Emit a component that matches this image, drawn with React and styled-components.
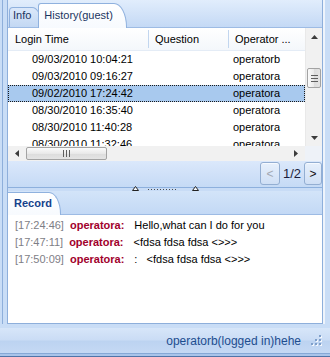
import React from 'react';
import styled, { createGlobalStyle, css } from 'styled-components';

const Global = createGlobalStyle`
  html, body { margin: 0; padding: 0; }
  body { width: 330px; height: 357px; overflow: hidden; background: #c9ddf6; }
`;

const FONT = `"Liberation Sans", Arial, sans-serif`;

const Window = styled.div`
  width: 330px;
  height: 357px;
  display: flex;
  flex-direction: column;
  background: #c9ddf6;
  font-family: ${FONT};
  font-size: 11px;
  color: #000;
  overflow: hidden;
`;

const Body = styled.div`
  height: 328px;
  flex: none;
  display: flex;
  box-sizing: border-box;
  padding: 0 5px 4px 2px;
`;

const Rail = styled.div`
  flex: 1;
  display: flex;
  min-width: 0;
  border-left: 1px solid #8eafdb;
  border-right: 2px solid #eef4fc;
  padding-left: 4px;
`;

const Panels = styled.div`
  flex: 1;
  display: flex;
  flex-direction: column;
  min-width: 0;
  border-left: 1px solid #8eafdb;
  border-right: 1px solid #8eafdb;
`;

const TopPanel = styled.section`
  height: 187px;
  flex: none;
  display: flex;
  flex-direction: column;
`;

const TabStrip = styled.div`
  height: 28px;
  flex: none;
  box-sizing: border-box;
  display: flex;
  align-items: flex-end;
  padding-left: 1px;
  background: linear-gradient(#e1edfc, #c4d9f5);
  border-bottom: 1px solid #9dbbe4;
`;

const Tab = styled.div`
  position: relative;
  box-sizing: border-box;
  white-space: nowrap;
  line-height: 14px;
  border: 1px solid #8fb1de;
  border-bottom: none;
  color: #1b355f;
  ${p => p.$active ? css`
    height: 25px;
    margin-bottom: -1px;
    margin-left: -4px;
    padding: 4px 13px 0 5px;
    border-radius: 3px 13px 0 0 / 3px 24px 0 0;
    background: linear-gradient(#ffffff, #f7fafe);
    z-index: 1;
  ` : css`
    height: 20px;
    padding: 0 10px 0 3px;
    border-radius: 4px 10px 0 0 / 4px 18px 0 0;
    background: linear-gradient(#dbe8fa, #c3d8f3);
  `}
`;

const Grid = styled.div`
  height: 118px;
  flex: none;
  display: flex;
  background: #fff;
`;

const GridMain = styled.div`
  flex: 1;
  min-width: 0;
  display: flex;
  flex-direction: column;
`;

const GridHeader = styled.div`
  height: 23px;
  flex: none;
  box-sizing: border-box;
  display: flex;
  align-items: center;
  background: linear-gradient(#ffffff, #f4f7fb);
  border-bottom: 1px solid #e4ecf6;
`;

const HeadCell = styled.div`
  box-sizing: border-box;
  width: ${p => (p.$w ? `${p.$w}px` : 'auto')};
  flex: ${p => (p.$w ? 'none' : 1)};
  height: 18px;
  line-height: 18px;
  padding-left: ${p => p.$pl}px;
  border-right: ${p => (p.$last ? 'none' : '1px solid #c2d6ef')};
  white-space: nowrap;
  overflow: hidden;
`;

const Rows = styled.div`
  height: 95px;
  overflow: hidden;
`;

const Row = styled.div`
  height: 17px;
  box-sizing: border-box;
  display: flex;
  align-items: center;
  border: 1px solid transparent;
  ${p => p.$selected && css`
    background: #a8c9ee;
    border: 1px dotted #1a1a1a;
  `}
`;

const Cell = styled.div`
  box-sizing: border-box;
  width: ${p => (p.$w ? `${p.$w}px` : 'auto')};
  flex: ${p => (p.$w ? 'none' : 1)};
  padding-left: ${p => p.$pl}px;
  white-space: nowrap;
  overflow: hidden;
  line-height: 15px;
`;

const VBar = styled.div`
  width: 16px;
  flex: none;
  display: flex;
  flex-direction: column;
  background: #f1f1f1;
  border-left: 1px solid #e9e9e9;
`;

const HBarRow = styled.div`
  height: 15px;
  flex: none;
  display: flex;
`;

const HBar = styled.div`
  flex: 1;
  display: flex;
  align-items: center;
  background: #f1f1f1;
`;

const Corner = styled.div`
  width: 17px;
  flex: none;
  background: #eef2f8;
`;

const ArrowBox = styled.div`
  width: ${p => (p.$h ? '18px' : '100%')};
  height: ${p => (p.$h ? '100%' : '17px')};
  flex: none;
  display: flex;
  align-items: center;
  justify-content: center;
`;

const Track = styled.div`
  flex: 1;
  display: flex;
  flex-direction: ${p => (p.$h ? 'row' : 'column')};
  align-items: center;
`;

const Thumb = styled.div`
  box-sizing: border-box;
  display: flex;
  align-items: center;
  justify-content: center;
  border: 1px solid #a3a3a3;
  border-radius: 2px;
  ${p => p.$h ? css`
    width: 81px;
    height: 13px;
    background: linear-gradient(#fbfbfb, #e9e9e9 50%, #dcdcdc 51%, #e4e4e4);
  ` : css`
    width: 14px;
    height: 20px;
    margin-top: 23px;
    background: linear-gradient(90deg, #fbfbfb, #e9e9e9 50%, #dcdcdc 51%, #e4e4e4);
  `}
`;

const Pager = styled.div`
  height: 26px;
  flex: none;
  box-sizing: border-box;
  display: flex;
  justify-content: flex-end;
  align-items: flex-start;
  padding-top: 1px;
  background: linear-gradient(#dbe8fb, #c5daf5);
`;

const PageBtn = styled.div`
  box-sizing: border-box;
  width: ${p => p.$w}px;
  height: 23px;
  display: flex;
  align-items: center;
  justify-content: center;
  border: 1px solid #93aed2;
  border-radius: 3px;
  background: linear-gradient(#e7f0fc, #cfdff5);
  color: ${p => (p.$disabled ? '#a3a9b3' : '#111')};
  font-size: 12px;
  box-shadow: inset 0 1px 0 #f6faff;
`;

const PageLabel = styled.div`
  height: 23px;
  line-height: 23px;
  padding: 0 3px 0 3px;
  font-size: 13px;
  color: #1a1c3a;
`;

const Splitter = styled.div`
  height: 4px;
  flex: none;
  box-sizing: border-box;
  border-top: 1px solid #8db0dd;
  background: #c8dcf6;
  display: flex;
  justify-content: center;
  align-items: flex-start;
`;

const Dots = styled.div`
  width: 30px;
  height: 1px;
  margin: 1px 14px 0 9px;
  background: repeating-linear-gradient(90deg, #4c4c4c 0 1px, transparent 1px 3px);
`;

const TriMark = styled.svg`
  display: block;
  margin-top: -2px;
`;

const BottomPanel = styled.section`
  flex: 1;
  display: flex;
  flex-direction: column;
  min-height: 0;
`;

const RecordStrip = styled.div`
  height: 24px;
  flex: none;
  box-sizing: border-box;
  display: flex;
  align-items: flex-end;
  background: linear-gradient(#d3e4f9, #c3d9f5);
  border-bottom: 1px solid #9dbbe4;
`;

const RecordTab = styled.div`
  box-sizing: border-box;
  height: 23px;
  margin-bottom: -1px;
  padding: 3px 8px 0 6px;
  line-height: 14px;
  border: 1px solid #8fb1de;
  border-left: none;
  border-bottom: none;
  border-radius: 0 12px 0 0 / 0 22px 0 0;
  background: linear-gradient(#ffffff, #f7fafe);
  color: #15428b;
  font-weight: bold;
  z-index: 1;
`;

const LogArea = styled.div`
  flex: 1;
  box-sizing: border-box;
  background: #fff;
  padding: 2px 7px;
  border-bottom: 1px solid #8eafdb;
  overflow: hidden;
`;

const LogLine = styled.div`
  display: flex;
  height: 17px;
  line-height: 17px;
  white-space: pre;
`;

const Stamp = styled.span`
  color: #7e7e86;
  margin-right: 6px;
`;

const Name = styled.span`
  color: #a1002c;
  font-weight: bold;
  margin-right: 10px;
`;

const Msg = styled.span`
  color: #000;
`;

const StatusBar = styled.div`
  height: 25px;
  flex: none;
  box-sizing: border-box;
  display: flex;
  align-items: center;
  justify-content: flex-end;
  padding-right: 8px;
  gap: 10px;
  background: linear-gradient(#d7e6f9, #cadcf5 48%, #bcd3f1 52%, #c5d9f4);
  color: #1d4d8f;
`;

const StatusText = styled.span`
  font-size: 12px;
  line-height: 14px;
  padding-top: 1px;
`;

const Footer = styled.div`
  height: 4px;
  flex: none;
  box-sizing: border-box;
  border-top: 1px solid #86a8d6;
  border-bottom: 1px solid #4f74a8;
  background: #a9c4ea;
`;

const Arrow = ({ dir, color = '#3c3c3c' }) => {
  const pts = {
    up: '0,4 3.5,0 7,4',
    down: '0,0 3.5,4 7,0',
    left: '4,0 0,3.5 4,7',
    right: '0,0 4,3.5 0,7',
  }[dir];
  const horiz = dir === 'left' || dir === 'right';
  return (
    <svg width={horiz ? 4 : 7} height={horiz ? 7 : 4} viewBox={horiz ? '0 0 4 7' : '0 0 7 4'}>
      <polygon points={pts} fill={color} />
    </svg>
  );
};

const Grip = ({ h }) =>
  h ? (
    <svg width="7" height="7" viewBox="0 0 7 7">
      {[0, 3, 6].map(x => (
        <rect key={x} x={x} y="0" width="1" height="7" fill="#5e5e5e" />
      ))}
    </svg>
  ) : (
    <svg width="7" height="7" viewBox="0 0 7 7">
      {[0, 3, 6].map(y => (
        <rect key={y} x="0" y={y} width="7" height="1" fill="#5e5e5e" />
      ))}
    </svg>
  );

const Tri = () => (
  <TriMark width="7" height="5" viewBox="0 0 7 5">
    <polygon points="0.5,4.5 3.5,0.5 6.5,4.5" fill="#f4f8fd" stroke="#222" strokeWidth="1" />
  </TriMark>
);

const ResizeGrip = () => (
  <svg width="11" height="11" viewBox="0 0 11 11">
    {[[8, 0], [8, 4], [4, 4], [8, 8], [4, 8], [0, 8]].map(([x, y]) => (
      <g key={`${x}-${y}`}>
        <rect x={x + 1} y={y + 1} width="2" height="2" fill="#f3f7fd" />
        <rect x={x} y={y} width="2" height="2" fill="#7f9fca" />
      </g>
    ))}
  </svg>
);

const rows = [
  ['09/03/2010 10:04:21', 'operatorb'],
  ['09/03/2010 09:16:27', 'operatora'],
  ['09/02/2010 17:24:42', 'operatora', true],
  ['08/30/2010 16:35:40', 'operatora'],
  ['08/30/2010 11:40:28', 'operatora'],
  ['08/30/2010 11:32:46', 'operatora'],
];

const logs = [
  ['[17:24:46]', 'operatora:', 'Hello,what can I do for you'],
  ['[17:47:11]', 'operatora:', '<fdsa fdsa fdsa <>>>'],
  ['[17:50:09]', 'operatora:', ':   <fdsa fdsa fdsa <>>>'],
];

export default function App() {
  return (
    <>
      <Global />
      <Window>
        <Body>
          <Rail>
            <Panels>
              <TopPanel>
                <TabStrip>
                  <Tab>Info</Tab>
                  <Tab $active>History(guest)</Tab>
                </TabStrip>
                <Grid>
                  <GridMain>
                    <GridHeader>
                      <HeadCell $w={141} $pl={7}>Login Time</HeadCell>
                      <HeadCell $w={80} $pl={6}>Question</HeadCell>
                      <HeadCell $pl={6} $last>Operator ...</HeadCell>
                    </GridHeader>
                    <Rows>
                      {rows.map(([t, op, sel]) => (
                        <Row key={t} $selected={sel}>
                          <Cell $w={140} $pl={23}>{t}</Cell>
                          <Cell $w={80} $pl={0}></Cell>
                          <Cell $pl={4}>{op}</Cell>
                        </Row>
                      ))}
                    </Rows>
                  </GridMain>
                  <VBar>
                    <ArrowBox><Arrow dir="up" /></ArrowBox>
                    <Track>
                      <Thumb><Grip /></Thumb>
                    </Track>
                    <ArrowBox><Arrow dir="down" /></ArrowBox>
                  </VBar>
                </Grid>
                <HBarRow>
                  <HBar>
                    <ArrowBox $h><Arrow dir="left" /></ArrowBox>
                    <Track $h>
                      <Thumb $h><Grip h /></Thumb>
                    </Track>
                    <ArrowBox $h><Arrow dir="right" /></ArrowBox>
                  </HBar>
                  <Corner />
                </HBarRow>
                <Pager>
                  <PageBtn $w={20} $disabled>&lt;</PageBtn>
                  <PageLabel>1/2</PageLabel>
                  <PageBtn $w={18}>&gt;</PageBtn>
                </Pager>
              </TopPanel>
              <Splitter>
                <Tri />
                <Dots />
                <Tri />
              </Splitter>
              <BottomPanel>
                <RecordStrip>
                  <RecordTab>Record</RecordTab>
                </RecordStrip>
                <LogArea>
                  {logs.map(([s, n, m]) => (
                    <LogLine key={s}>
                      <Stamp>{s}</Stamp>
                      <Name>{n}</Name>
                      <Msg>{m}</Msg>
                    </LogLine>
                  ))}
                </LogArea>
              </BottomPanel>
            </Panels>
          </Rail>
        </Body>
        <StatusBar>
          <StatusText>operatorb(logged in)hehe</StatusText>
          <ResizeGrip />
        </StatusBar>
        <Footer />
      </Window>
    </>
  );
}
